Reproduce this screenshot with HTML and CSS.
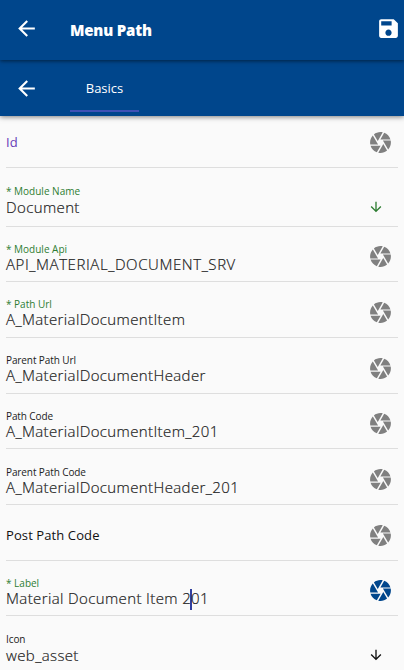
FILE: index.html
```html
<!DOCTYPE html>
<html lang="en">
<head>
<meta charset="utf-8">
<title>Menu Path</title>
<link rel="stylesheet" href="styles.css">
</head>
<body>
<svg class="defs" aria-hidden="true">
  <symbol id="back" viewBox="0 0 24 24"><path d="M20 11H7.83l5.59-5.59L12 4l-8 8 8 8 1.41-1.41L7.83 13H20v-2z"/></symbol>
  <symbol id="down" viewBox="0 0 24 24"><path d="M20 12l-1.41-1.41L13 16.17V4h-2v12.17l-5.58-5.59L4 12l8 8 8-8z"/></symbol>
  <symbol id="save" viewBox="0 0 24 24"><path d="M17 3H5c-1.11 0-2 .9-2 2v14c0 1.1.89 2 2 2h14c1.1 0 2-.9 2-2V7l-4-4zm-5 16c-1.66 0-3-1.34-3-3s1.34-3 3-3 3 1.34 3 3-1.34 3-3 3zm3-10H5V5h10v4z"/></symbol>
  <symbol id="camera" viewBox="0 0 24 24"><path d="M9.4 10.5l4.77-8.26C13.47 2.09 12.75 2 12 2c-2.4 0-4.6.85-6.32 2.25l3.66 6.35.06-.1zM21.54 9c-.92-2.92-3.15-5.26-6-6.34L11.88 9h9.66zm.26 1h-7.49l.29.5 4.76 8.25C21 16.97 22 14.61 22 12c0-.69-.07-1.35-.2-2zM8.54 12l-3.9-6.75C3.01 7.03 2 9.39 2 12c0 .69.07 1.35.2 2h7.49l-1.15-2zm-6.08 3c.92 2.92 3.15 5.26 6 6.34L12.12 15H2.46zm11.27 0l-3.9 6.76c.7.15 1.42.24 2.17.24 2.4 0 4.6-.85 6.32-2.25l-3.66-6.35-.93 1.6z"/></symbol>
</svg>
<header class="bar">
  <svg class="nav"><use href="#back"/></svg>
  <h1 class="title">Menu Path</h1>
  <svg class="nav save"><use href="#save"/></svg>
</header>
<nav class="tabs">
  <svg class="nav"><use href="#back"/></svg>
  <span class="tab">Basics</span>
</nav>
<main class="form">
  <div class="row first"><div class="text"><span class="empty id">Id</span></div><svg class="icon"><use href="#camera"/></svg></div>
  <div class="row module"><div class="text"><span class="label req">* Module Name</span><span class="value">Document</span></div><svg class="icon arrow green"><use href="#down"/></svg></div>
  <div class="row short"><div class="text"><span class="label req">* Module Api</span><span class="value caps">API_MATERIAL_DOCUMENT_SRV</span></div><svg class="icon"><use href="#camera"/></svg></div>
  <div class="row"><div class="text"><span class="label req">* Path Url</span><span class="value">A_MaterialDocumentItem</span></div><svg class="icon"><use href="#camera"/></svg></div>
  <div class="row"><div class="text"><span class="label">Parent Path Url</span><span class="value">A_MaterialDocumentHeader</span></div><svg class="icon"><use href="#camera"/></svg></div>
  <div class="row short"><div class="text"><span class="label">Path Code</span><span class="value">A_MaterialDocumentItem_201</span></div><svg class="icon"><use href="#camera"/></svg></div>
  <div class="row low"><div class="text"><span class="label">Parent Path Code</span><span class="value">A_MaterialDocumentHeader_201</span></div><svg class="icon"><use href="#camera"/></svg></div>
  <div class="row"><div class="text"><span class="empty">Post Path Code</span></div><svg class="icon"><use href="#camera"/></svg></div>
  <div class="row short"><div class="text"><span class="label req">* Label</span><span class="value">Material Document Item 2<i class="caret"></i>01</span></div><svg class="icon blue"><use href="#camera"/></svg></div>
  <div class="row last"><div class="text"><span class="label">Icon</span><span class="value">web_asset</span></div><svg class="icon arrow black"><use href="#down"/></svg></div>
</main>
</body>
</html>
```
FILE: styles.css
```css
* { box-sizing: border-box; }
body {
  margin: 0;
  height: 670px;
  overflow: hidden;
  background: #fafafa;
  color: #222;
  font-family: "Open Sans", "Noto Sans", sans-serif;
}
svg { display: block; fill: currentColor; flex: none; }
.defs { display: none; }
.bar, .tabs {
  position: relative;
  display: flex;
  align-items: center;
  padding: 0 3px 0 14px;
  background: #00468c;
  color: #fff;
}
.bar { height: 60px; padding-bottom: 4px; z-index: 2; box-shadow: 0 1px 4px rgba(0, 0, 0, .55); }
.tabs { height: 56px; z-index: 1; box-shadow: 0 1px 5px rgba(0, 0, 0, .5); }
.nav { width: 25px; height: 25px; }
.save { margin-left: auto; }
.title { margin: 3px 0 0 31px; font-size: 15px; line-height: 20px; font-weight: 800; letter-spacing: -.2px; }
.tab {
  align-self: flex-end;
  width: 69px;
  height: 40px;
  margin: 0 0 4px 31px;
  border-bottom: 2px solid #3f51b5;
  font-size: 13px;
  line-height: 33px;
  text-align: center;
}
.form { padding: 0 6px; }
.row {
  display: flex;
  align-items: center;
  justify-content: space-between;
  height: 56px;
  padding-right: 5.3px;
  border-bottom: 1px solid #dedede;
}
.row.first { height: 52px; }
.row.module { height: 59px; }
.row.short { height: 55px; }
.row.last { height: 60px; border: 0; }
.text { display: flex; flex-direction: column; white-space: nowrap; padding-top: 7px; }
.low .text { padding-top: 9px; }
.first .text { padding-top: 1px; }
.last .text { padding-top: 6px; }
.label { font-size: 10px; line-height: 12px; color: #222; letter-spacing: -.1px; }
.req { color: #2e7d32; letter-spacing: 0; }
.value {
  font-size: 15px;
  line-height: 18px;
  font-weight: 300;
  letter-spacing: .38px;
  -webkit-text-stroke: .2px currentColor;
}
.module .value, .last .value { line-height: 20px; }
.caps { letter-spacing: .58px; }
.empty { font-size: 13px; line-height: 20px; color: #111; letter-spacing: .1px; margin-top: -2px; }
.empty.id { color: #673ab7; margin-top: 0; }
.icon { width: 25px; height: 25px; margin-top: 5px; color: #808080; }
.short .icon { margin-top: 4px; }
.first .icon { margin-top: 1px; }
.icon.arrow { width: 16px; height: 16px; margin: 20px 9px 0 0; }
.icon.green { color: #2e7d32; }
.icon.blue { color: #00468c; }
.icon.black { color: #111; }
.last .arrow { margin-top: 18px; }
.caret { display: inline-block; width: 2px; height: 21px; margin: -6px -1px; vertical-align: middle; background: #303f9f; }
```
